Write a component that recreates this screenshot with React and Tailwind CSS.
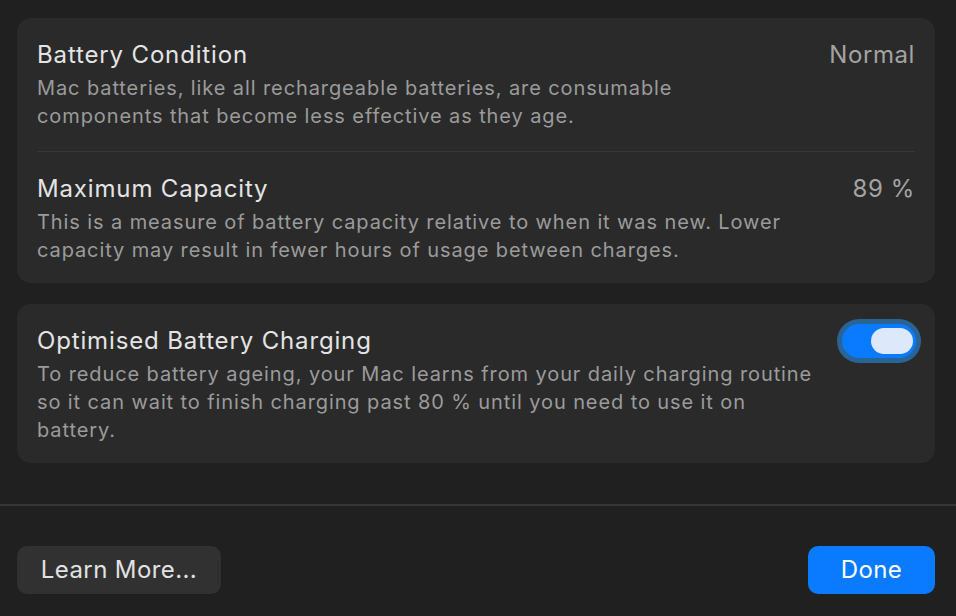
import React, { useState } from 'react'

const font = { fontFamily: 'Inter, "Noto Sans", sans-serif' }

const Row = ({ title, desc, value, last }) => (
  <div className={`flex items-start justify-between gap-[28px] pt-[21px] ${last ? 'pb-[19px]' : 'pb-[21px]'}`}>
    <div className="flex flex-col gap-[3px]">
      <div className="text-[24px] leading-[32px] text-[#e4e4e4] tracking-[0.85px]">{title}</div>
      <div className="text-[20px] leading-[28px] text-[#9b9b9b] tracking-[0.9px]">{desc}</div>
    </div>
    <div className="text-[24px] leading-[32px] text-[#a3a3a3] tracking-[0.6px] shrink-0">{value}</div>
  </div>
)

const Toggle = ({ on, onChange }) => (
  <button
    onClick={() => onChange(!on)}
    className={`mt-[-1px] mr-[-1px] shrink-0 w-[74px] h-[34px] rounded-full flex items-center px-[3px] ring-[5px] ring-[#2a6497] ${on ? 'bg-[#0a7aff] justify-end' : 'bg-[#4a4a4a] justify-start'}`}
  >
    <div className="w-[42px] h-[26px] rounded-full bg-[#dde9fb]" />
  </button>
)

const App = () => {
  const [optimised, setOptimised] = useState(true)

  return (
    <div className="w-[956px] h-[616px] bg-[#202020] flex flex-col overflow-hidden" style={font}>
      <div className="flex flex-col gap-[21px] pl-[17px] pr-[21px] pt-[18px]">
        {/* condition + capacity */}
        <div className="rounded-[14px] bg-[#2a2a2a] px-[20px]">
          <Row
            title="Battery Condition"
            value="Normal"
            desc="Mac batteries, like all rechargeable batteries, are consumable components that become less effective as they age."
          />
          <div className="h-px bg-[#393939]" />
          <Row
            last
            title="Maximum Capacity"
            value="89 %"
            desc="This is a measure of battery capacity relative to when it was new. Lower capacity may result in fewer hours of usage between charges."
          />
        </div>

        {/* optimised charging */}
        <div className="rounded-[14px] bg-[#2a2a2a] px-[20px]">
          <div className="flex items-start justify-between gap-[16px] pt-[21px] pb-[19px]">
            <div className="flex flex-col gap-[3px]">
              <div className="text-[24px] leading-[32px] text-[#e4e4e4] tracking-[0.85px]">Optimised Battery Charging</div>
              <div className="text-[20px] leading-[28px] text-[#9b9b9b] tracking-[0.9px]">
                To reduce battery ageing, your Mac learns from your daily charging routine so it can wait to finish charging past 80 % until you need to use it on battery.
              </div>
            </div>
            <Toggle on={optimised} onChange={setOptimised} />
          </div>
        </div>
      </div>

      <div className="mt-[41px] h-[2px] bg-[#363636]" />

      <div className="flex items-center justify-between pl-[17px] pr-[21px] pt-[40px]">
        <button className="h-[48px] w-[204px] rounded-[10px] bg-[#313131] text-[24px] text-[#e2e2e2] tracking-[0.4px]">
          Learn More...
        </button>
        <button className="h-[48px] w-[127px] rounded-[10px] bg-[#0a7aff] text-[24px] text-white tracking-[0.4px]">
          Done
        </button>
      </div>
    </div>
  )
}

export default App
